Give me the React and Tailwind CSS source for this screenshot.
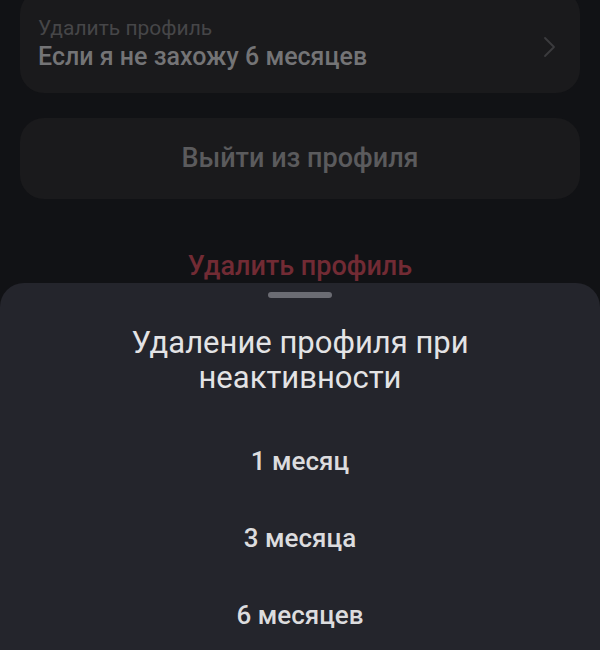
export default function App() {
  const font = { fontFamily: "Roboto, 'Noto Sans', sans-serif" };
  return (
    <div
      className="w-[600px] h-[650px] overflow-hidden flex flex-col bg-[#111215] font-['Roboto',_'Noto_Sans',_sans-serif]"
      style={font}
    >
      <div className="mx-[20px] -mt-[10px] pt-[25px] pb-[20px] pl-[18px] pr-[23px] rounded-[24px] bg-[#1a1a1c] flex items-center justify-between">
        <div className="flex flex-col">
          <span className="text-[21px] leading-[26px] text-[#464648]">Удалить профиль</span>
          <span className="text-[25px] leading-[32px] font-medium text-[#747476]">
            Если я не захожу 6 месяцев
          </span>
        </div>
        <svg width="14" height="22" viewBox="0 0 14 22" className="mt-[5px]">
          <path d="M2 2 L11 11 L2 20" fill="none" stroke="#3b3b3e" strokeWidth="1.8" strokeLinecap="round" strokeLinejoin="round" />
        </svg>
      </div>

      <div className="mx-[20px] mt-[25px] h-[81px] shrink-0 rounded-[24px] bg-[#1a1a1c] flex items-center justify-center">
        <span className="text-[27px] font-medium text-[#5b5b5d]">Выйти из профиля</span>
      </div>

      <div className="mt-[51px] text-center text-[27px] leading-[32px] font-medium text-[#722b34]">
        Удалить профиль
      </div>

      <div className="mt-[1px] flex-1 rounded-t-[24px] bg-[#24252c] flex flex-col items-center">
        <div className="mt-[9px] w-[64px] h-[6px] shrink-0 rounded-full bg-[#6b6c73]" />
        <div className="mt-[27px] text-center text-[31px] leading-[35px] text-[#e3e3e5] w-[400px]">
          Удаление профиля при неактивности
        </div>
        <div className="mt-[28px] flex flex-col w-full">
          {["1 месяц", "3 месяца", "6 месяцев"].map((t) => (
            <div key={t} className="h-[77px] shrink-0 flex items-center justify-center text-[26px] font-medium text-[#dcdcde]">
              {t}
            </div>
          ))}
        </div>
      </div>
    </div>
  );
}
